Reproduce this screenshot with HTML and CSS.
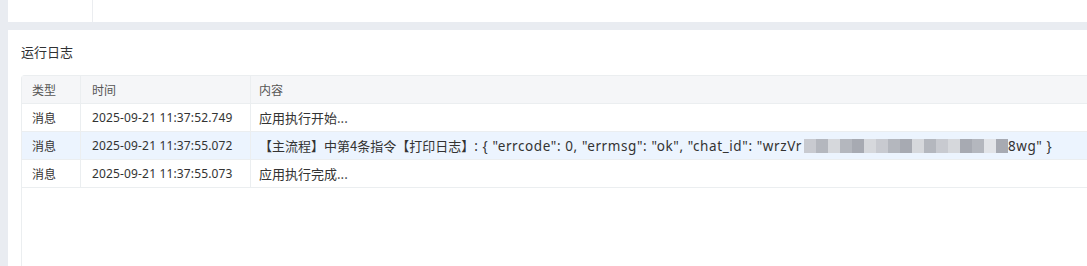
FILE: index.html
```html
<!DOCTYPE html>
<html lang="zh">
<head>
<meta charset="utf-8">
<link rel="stylesheet" href="styles.css">
</head>
<body>
<div class="top-panel">
  <div class="top-cell"></div>
  <div class="top-rest"></div>
</div>
<div class="log-panel">
  <div class="log-title">运行日志</div>
  <div class="log-table">
    <div class="row head">
      <div class="c c-type">类型</div>
      <div class="c c-time">时间</div>
      <div class="c c-content">内容</div>
    </div>
    <div class="row">
      <div class="c c-type">消息</div>
      <div class="c c-time">2025-09-21 11:37:52.749</div>
      <div class="c c-content">应用执行开始...</div>
    </div>
    <div class="row active">
      <div class="c c-type">消息</div>
      <div class="c c-time">2025-09-21 11:37:55.072</div>
      <div class="c c-content"><span class="br">【主流程】</span>中第4条指令<span class="br">【打印日志】</span><span class="lat">: { "errcode": 0, "errmsg": "ok", "chat_id": "wrzVr</span><span class="blur"><i class="b1"></i><i class="b2"></i><i class="b3"></i><i class="b2"></i><i class="b4"></i><i class="b3"></i><i class="b1"></i><i class="b2"></i><i class="b4"></i><i class="b3"></i><i class="b2"></i><i class="b1"></i><i class="b3"></i><i class="b4"></i><i class="b2"></i><i class="b5"></i><i class="b4"></i></span><span class="lat">8wg" }</span></div>
    </div>
    <div class="row">
      <div class="c c-type">消息</div>
      <div class="c c-time">2025-09-21 11:37:55.073</div>
      <div class="c c-content">应用执行完成...</div>
    </div>
  </div>
</div>
</body>
</html>
```
FILE: styles.css
```css
html, body {
  margin: 0;
  padding: 0;
  height: 100%;
}
body {
  background: #e9ecf1;
  font-family: "Noto Sans", "Noto Sans CJK SC", sans-serif;
  font-size: 12px;
  color: #333;
  overflow: hidden;
}
.top-panel {
  margin-left: 8px;
  height: 22px;
  background: #fff;
  display: flex;
}
.top-cell {
  width: 84px;
  border-right: 1px solid #ebedf0;
}
.top-rest { flex: 1; }
.log-panel {
  margin-top: 8px;
  margin-left: 8px;
  background: #fff;
  height: calc(100% - 30px);
  padding: 12px 0 0 13px;
  box-sizing: border-box;
}
.log-title {
  font-family: "Noto Sans CJK SC", sans-serif;
  font-size: 13px;
  line-height: 20px;
  color: #303133;
}
.log-table {
  margin-top: 13px;
  width: 1100px;
  height: 200px;
  border-left: 1px solid #ebeef0;
  border-top: 1px solid #ebeef0;
  border-top-left-radius: 4px;
}
.row {
  display: flex;
  height: 28px;
  border-bottom: 1px solid #ebeef0;
  box-sizing: border-box;
}
.row.head {
  background: #f5f6f8;
  color: #555;
}
.row.active {
  background: #ecf4fe;
}
.c {
  display: flex;
  align-items: center;
  padding-left: 10px;
  box-sizing: border-box;
  white-space: nowrap;
  border-right: 1px solid #ebeef0;
}
.c-type { width: 59px; font-family: "Noto Sans CJK SC", sans-serif; }
.c-time { width: 170px; padding-left: 11px; letter-spacing: 0.15px; }
.c-content {
  flex: 1;
  border-right: none;
  padding-left: 8px;
  font-family: "Noto Sans CJK SC", sans-serif;
  font-size: 13px;
}
.head .c { font-family: "Noto Sans CJK SC", sans-serif; font-size: 12px; letter-spacing: 0; }
.lat {
  font-family: "Noto Sans", sans-serif;
  font-size: 13.5px;
  letter-spacing: 0.6px;
}
.blur {
  display: inline-flex;
  height: 14px;
  margin-left: 2px;
}
.blur i {
  display: block;
  width: 12px;
  height: 14px;
}
.b1 { background: #c8cad0; }
.b2 { background: #b4b7be; }
.b3 { background: #d6d8dc; }
.b4 { background: #a7aab2; }
.b5 { background: #e2e4e8; }
```
